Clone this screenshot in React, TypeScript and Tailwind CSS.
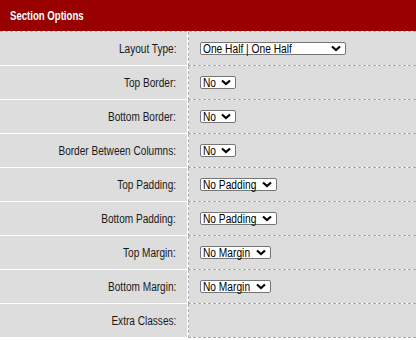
type Row = {
	label: string;
	value?: string;
	width?: number;
};

const rows: Row[] = [
	{ label: 'Layout Type:', value: 'One Half | One Half', width: 146 },
	{ label: 'Top Border:', value: 'No', width: 36 },
	{ label: 'Bottom Border:', value: 'No', width: 36 },
	{ label: 'Border Between Columns:', value: 'No', width: 36 },
	{ label: 'Top Padding:', value: 'No Padding', width: 77 },
	{ label: 'Bottom Padding:', value: 'No Padding', width: 77 },
	{ label: 'Top Margin:', value: 'No Margin', width: 71 },
	{ label: 'Bottom Margin:', value: 'No Margin', width: 71 },
	{ label: 'Extra Classes:' },
];

function Chevron() {
	return (
		<svg width="10" height="7" viewBox="0 0 10 7" className="shrink-0">
			<path d="M1 1.5 L5 5 L9 1.5" fill="none" stroke="#000" strokeWidth="2.2" />
		</svg>
	);
}

// the original face is a narrow sans; squeeze Arial-width text to match
function FakeSelect({ value, width }: { value: string; width: number }) {
	return (
		<div
			className="flex h-[13px] items-center rounded-[2px] border border-[#767676] bg-white pl-[2px] pr-[4px] text-[12px] leading-none text-black"
			style={{ width }}
		>
			<span className="flex-1 min-w-0 whitespace-nowrap">
				<span className="inline-block origin-left scale-x-[0.85]">{value}</span>
			</span>
			<Chevron />
		</div>
	);
}

export default function App() {
	return (
		<div className="w-[416px] h-[340px] overflow-hidden bg-white font-['Liberation_Sans',Arial,sans-serif]">
			<div className="h-[32px] flex items-center px-[10px] bg-[#990000] bg-clip-padding border-b border-dashed border-[#b5b5b5] text-white text-[12px] font-bold">
				<span className="inline-block origin-left scale-x-[0.8]">Section Options</span>
			</div>
			{rows.map((row) => (
				<div key={row.label} className="flex h-[34px]">
					<div className="w-[188px] flex items-center justify-end pr-[11px] bg-[#dddddd] border-b border-r border-white text-[12px] text-[#1a1a1a]">
						<span className="inline-block whitespace-nowrap origin-right scale-x-[0.84]">{row.label}</span>
					</div>
					<div className="flex-1 flex items-center pl-[11px] bg-[#dddddd] bg-clip-padding border-b border-l border-dashed border-[#aaaaaa]">
						{row.value && row.width ? (
							<FakeSelect value={row.value} width={row.width} />
						) : null}
					</div>
				</div>
			))}
		</div>
	);
}
